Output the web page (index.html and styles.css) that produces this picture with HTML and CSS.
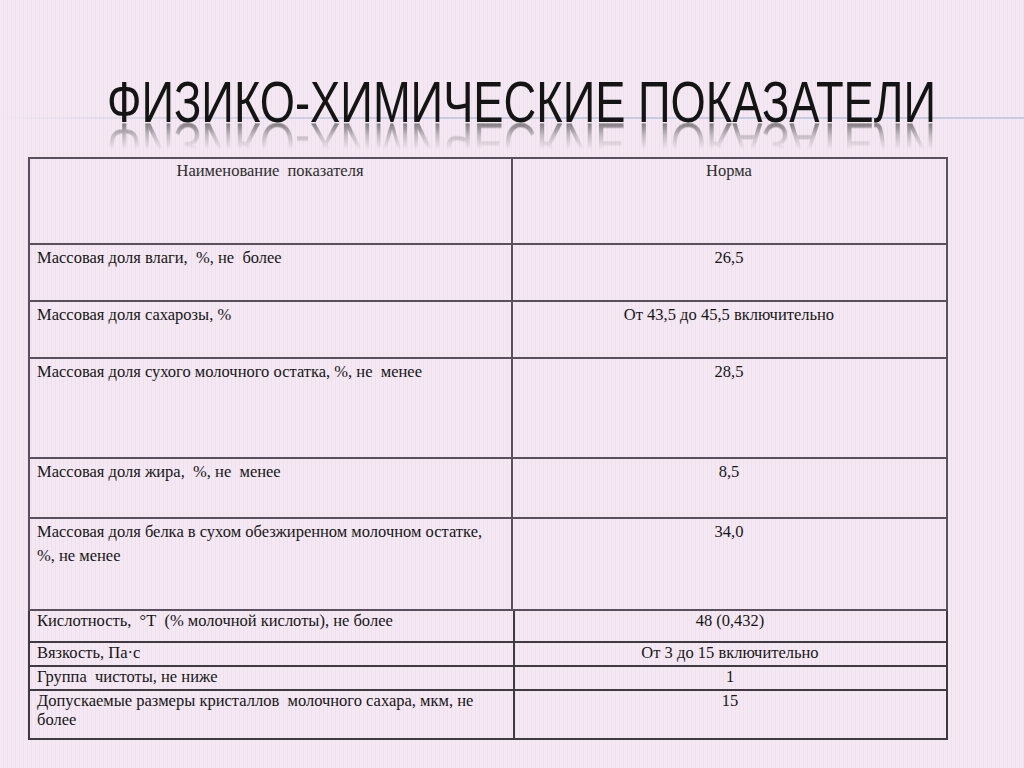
FILE: index.html
```html
<!DOCTYPE html>
<html lang="ru">
<head>
<meta charset="utf-8">
<title>Физико-химические показатели</title>
<link rel="stylesheet" href="styles.css">
</head>
<body>
<div class="slide">
  <header class="header">
    <h1 class="title">ФИЗИКО-ХИМИЧЕСКИЕ ПОКАЗАТЕЛИ</h1>
  </header>
  <table class="grid upper">
    <colgroup><col class="c1"><col class="c2"></colgroup>
    <tr class="r-head"><td class="th">Наименование  показателя</td><td class="th">Норма</td></tr>
    <tr class="r57"><td>Массовая доля влаги,  %, не  более</td><td class="num">26,5</td></tr>
    <tr class="r57"><td>Массовая доля сахарозы, %</td><td class="num">От 43,5 до 45,5 включительно</td></tr>
    <tr class="r100"><td>Массовая доля сухого молочного остатка, %, не  менее</td><td class="num">28,5</td></tr>
    <tr class="r60"><td>Массовая доля жира,  %, не  менее</td><td class="num">8,5</td></tr>
    <tr class="r92"><td>Массовая доля белка в сухом обезжиренном молочном остатке,<br>%, не менее</td><td class="num">34,0</td></tr>
  </table>
  <table class="grid lower">
    <colgroup><col class="c1"><col class="c2"></colgroup>
    <tr class="r31"><td>Кислотность,  °Т  (% молочной кислоты), не более</td><td class="num">48 (0,432)</td></tr>
    <tr class="r24"><td>Вязкость, Па·с</td><td class="num">От 3 до 15 включительно</td></tr>
    <tr class="r24"><td>Группа  чистоты, не ниже</td><td class="num">1</td></tr>
    <tr class="r49"><td>Допускаемые размеры кристаллов  молочного сахара, мкм, не<br>более</td><td class="num">15</td></tr>
  </table>
</div>
</body>
</html>
```
FILE: styles.css
```css
html, body {
  margin: 0;
  padding: 0;
}
body {
  width: 1024px;
  height: 768px;
  overflow: hidden;
  background-color: #f3e6f2;
  background-image: repeating-linear-gradient(90deg, #f4e8f3 0 3px, #eee0ec 3px 4px);
}
.slide {
  width: 1024px;
  height: 768px;
  display: flex;
  flex-direction: column;
}
.header {
  margin-top: 84px;
  height: 73px;
  padding-left: 107px;
  background: linear-gradient(to right, rgba(198, 204, 226, 0) 0, rgba(198, 204, 226, 0.6) 15%, #c6cce2 40%) no-repeat 0 33px / 100% 2px;
}
.title {
  margin: 0;
  display: inline-block;
  font-family: "Liberation Sans", Arial, sans-serif;
  font-weight: normal;
  font-size: 45.3px;
  line-height: 46px;
  color: #141414;
  white-space: nowrap;
  transform: scaleY(1.26);
  transform-origin: 0 38.7px;
  -webkit-box-reflect: below -14.6px linear-gradient(to bottom, transparent 38%, rgba(0, 0, 0, 0.2) 62%, rgba(0, 0, 0, 0.75));
}
.grid {
  margin-left: 28px;
  border-collapse: collapse;
  table-layout: fixed;
  font-family: "Liberation Serif", "Times New Roman", serif;
  font-size: 16.5px;
  color: #161616;
}
.upper {
  width: 920px;
}
.lower {
  width: 920px;
}
.upper .c1 { width: 483px; }
.lower .c1 { width: 485px; }
.grid td {
  border: 2px solid #4f4652;
  vertical-align: top;
  white-space: pre-wrap;
  padding: 1px 8px 0 7px;
  line-height: 24px;
}
.upper td { border-color: #5a505d; }
.lower td {
  line-height: 19px;
  padding: 0 8px 0 7px;
  border-color: #3f3a41;
}
.lower tr:first-child td { border-top: none; }
.grid td.num { text-align: center; }
.grid td.th {
  text-align: center;
  color: #2c2c2c;
  padding-top: 0;
}
.r-head { height: 86px; }
.r57 { height: 57px; }
.r100 { height: 100px; }
.r60 { height: 60px; }
.r92 { height: 92px; }
.r31 { height: 31px; }
.r24 { height: 24px; }
.r49 { height: 49px; }
```
